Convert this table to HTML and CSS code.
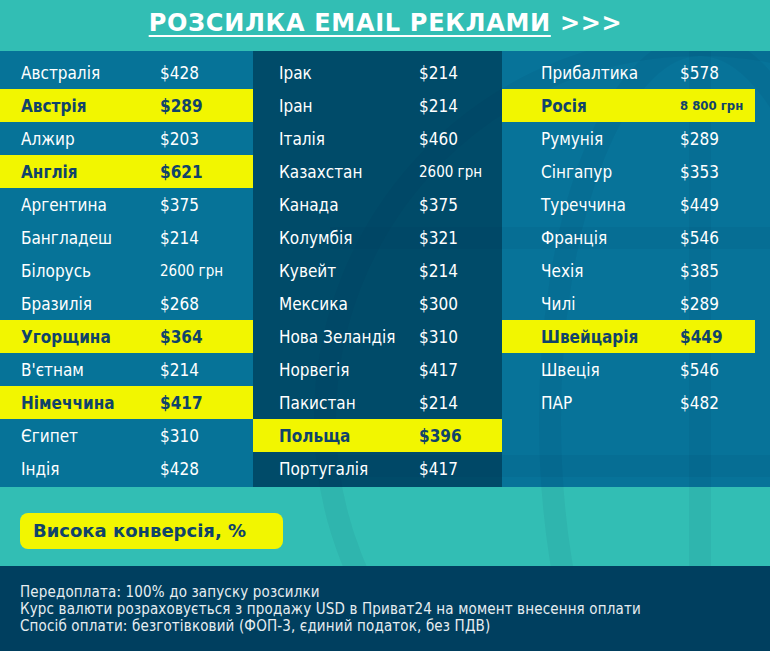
FILE: index.html
```html
<!DOCTYPE html>
<html lang="uk">
<head>
<meta charset="utf-8">
<title>Розсилка email реклами</title>
<link rel="stylesheet" href="styles.css">
</head>
<body>
<div class="page">
  <header class="header">
    <h1 class="title"><span class="title-link">РОЗСИЛКА EMAIL РЕКЛАМИ</span> &gt;&gt;&gt;</h1>
  </header>

  <section class="table">
    <div class="col col-1">
      <div class="row"><span class="name">Австралія</span><span class="price">$428</span></div>
      <div class="row hl"><span class="name">Австрія</span><span class="price">$289</span></div>
      <div class="row"><span class="name">Алжир</span><span class="price">$203</span></div>
      <div class="row hl"><span class="name">Англія</span><span class="price">$621</span></div>
      <div class="row"><span class="name">Аргентина</span><span class="price">$375</span></div>
      <div class="row"><span class="name">Бангладеш</span><span class="price">$214</span></div>
      <div class="row"><span class="name">Білорусь</span><span class="price small">2600 грн</span></div>
      <div class="row"><span class="name">Бразилія</span><span class="price">$268</span></div>
      <div class="row hl"><span class="name">Угорщина</span><span class="price">$364</span></div>
      <div class="row"><span class="name">В'єтнам</span><span class="price">$214</span></div>
      <div class="row hl"><span class="name">Німеччина</span><span class="price">$417</span></div>
      <div class="row"><span class="name">Єгипет</span><span class="price">$310</span></div>
      <div class="row"><span class="name">Індія</span><span class="price">$428</span></div>
    </div>
    <div class="col col-2">
      <div class="row"><span class="name">Ірак</span><span class="price">$214</span></div>
      <div class="row"><span class="name">Іран</span><span class="price">$214</span></div>
      <div class="row"><span class="name">Італія</span><span class="price">$460</span></div>
      <div class="row"><span class="name">Казахстан</span><span class="price small">2600 грн</span></div>
      <div class="row"><span class="name">Канада</span><span class="price">$375</span></div>
      <div class="row"><span class="name">Колумбія</span><span class="price">$321</span></div>
      <div class="row"><span class="name">Кувейт</span><span class="price">$214</span></div>
      <div class="row"><span class="name">Мексика</span><span class="price">$300</span></div>
      <div class="row"><span class="name">Нова Зеландія</span><span class="price">$310</span></div>
      <div class="row"><span class="name">Норвегія</span><span class="price">$417</span></div>
      <div class="row"><span class="name">Пакистан</span><span class="price">$214</span></div>
      <div class="row hl"><span class="name">Польща</span><span class="price">$396</span></div>
      <div class="row"><span class="name">Португалія</span><span class="price">$417</span></div>
    </div>
    <div class="col col-3">
      <div class="row"><span class="name">Прибалтика</span><span class="price">$578</span></div>
      <div class="row hl"><span class="name">Росія</span><span class="price small">8 800 грн</span></div>
      <div class="row"><span class="name">Румунія</span><span class="price">$289</span></div>
      <div class="row"><span class="name">Сінгапур</span><span class="price">$353</span></div>
      <div class="row"><span class="name">Туреччина</span><span class="price">$449</span></div>
      <div class="row"><span class="name">Франція</span><span class="price">$546</span></div>
      <div class="row"><span class="name">Чехія</span><span class="price">$385</span></div>
      <div class="row"><span class="name">Чилі</span><span class="price">$289</span></div>
      <div class="row hl"><span class="name">Швейцарія</span><span class="price">$449</span></div>
      <div class="row"><span class="name">Швеція</span><span class="price">$546</span></div>
      <div class="row"><span class="name">ПАР</span><span class="price">$482</span></div>
    </div>
  </section>

  <section class="promo">
    <div class="badge">Висока конверсія, %</div>
  </section>

  <footer class="footer">
    <p>Передоплата: 100% до запуску розсилки</p>
    <p>Курс валюти розраховується з продажу USD в Приват24 на момент внесення оплати</p>
    <p>Спосіб оплати: безготівковий (ФОП-3, єдиний податок, без ПДВ)</p>
  </footer>

  <svg class="globe" width="770" height="515" viewBox="0 51 770 515" aria-hidden="true">
    <g fill="none" stroke="#002a40" stroke-opacity="0.055" stroke-width="22">
      <circle cx="700" cy="420" r="375"/>
      <ellipse cx="700" cy="420" rx="150" ry="375"/>
      <line x1="700" y1="40" x2="700" y2="800"/>
      <line x1="320" y1="466" x2="780" y2="466"/>
      <line x1="330" y1="238" x2="780" y2="238"/>
    </g>
  </svg>
</div>
</body>
</html>
```

FILE: styles.css
```css
* { box-sizing: border-box; }

html, body {
  margin: 0;
  padding: 0;
  background: #003f5f;
}

.page {
  position: relative;
  width: 770px;
  height: 651px;
  overflow: hidden;
  font-family: "DejaVu Sans Condensed", "DejaVu Sans", sans-serif;
}

.header {
  height: 51px;
  background: #32beb4;
  display: flex;
  justify-content: center;
  align-items: flex-start;
  padding-top: 9px;
  padding-left: 1px;
}

.title {
  margin: 0;
  font-family: "DejaVu Sans", sans-serif;
  font-weight: bold;
  font-size: 24px;
  line-height: 28px;
  letter-spacing: 0.7px;
  color: #ffffff;
}

.title-link {
  text-decoration: underline;
  text-decoration-thickness: 2px;
  text-underline-offset: 4px;
}

.table {
  display: grid;
  grid-template-columns: 253px 249px 268px;
  height: 436px;
}

.col {
  padding-top: 5px;
  padding-bottom: 2px;
  color: #ffffff;
}

.col-1 { background: #067398; }
.col-2 { background: #004b69; }
.col-3 { background: #077399; }

.row {
  position: relative;
  z-index: 1;
  height: 33px;
  display: flex;
  align-items: center;
  font-size: 17px;
  white-space: nowrap;
}

.col-1 .row { padding-left: 21px; }
.col-2 .row { padding-left: 26px; }
.col-3 .row { padding-left: 39px; margin-right: 15px; }

.name { width: 139px; flex: none; }
.col-2 .name { width: 140px; }

.price.small { font-size: 15px; }

.row.hl {
  background: #f2f600;
  color: #10436a;
  font-weight: bold;
}

.row.hl .price.small { font-size: 13px; }

.promo {
  height: 79px;
  background: #32beb4;
  padding: 26px 0 0 20px;
}

.badge {
  position: relative;
  z-index: 1;
  width: 263px;
  height: 36px;
  border-radius: 8px;
  background: #f2f600;
  color: #10436a;
  font-family: "DejaVu Sans", sans-serif;
  font-weight: bold;
  font-size: 18px;
  line-height: 36px;
  padding-left: 13px;
}

.footer {
  position: relative;
  z-index: 1;
  height: 85px;
  background: #003f5f;
  padding: 18px 20px 0;
  color: #e6edf1;
  font-size: 15px;
  line-height: 17px;
  letter-spacing: 0.15px;
}

.footer p { margin: 0; }

.globe {
  position: absolute;
  z-index: 0;
  left: 0;
  top: 51px;
  pointer-events: none;
}
```
